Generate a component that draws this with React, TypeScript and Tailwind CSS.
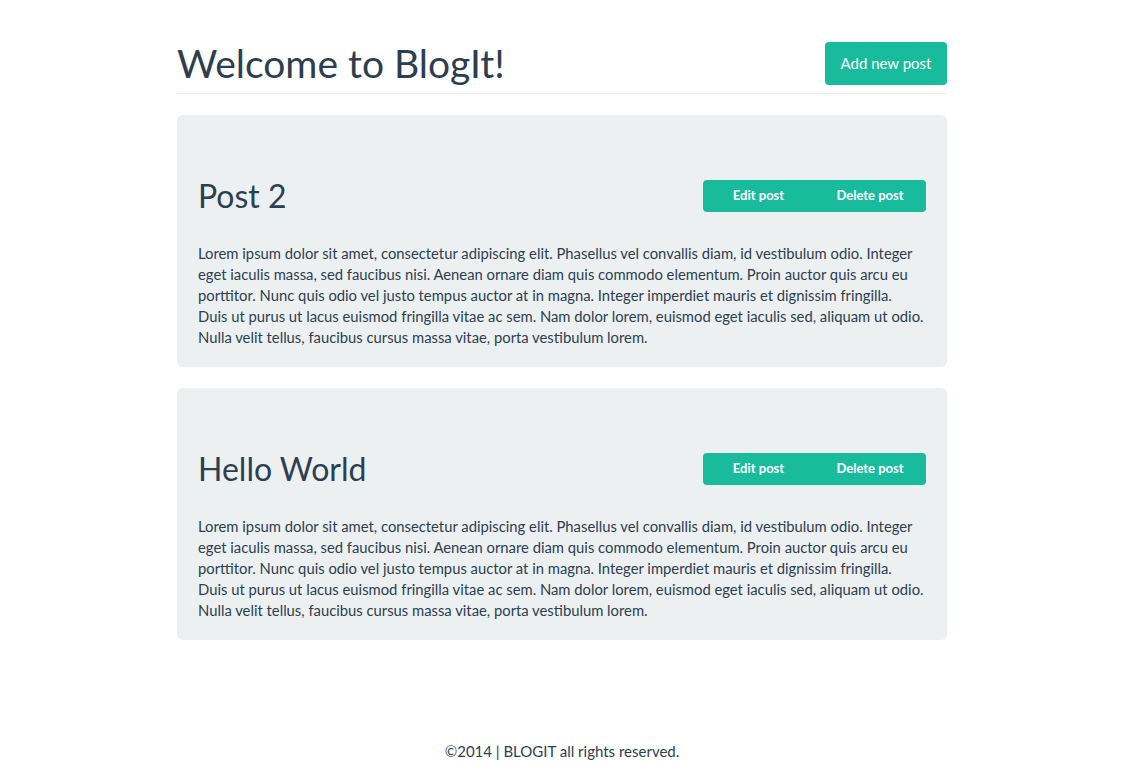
const lines = [
  "Lorem ipsum dolor sit amet, consectetur adipiscing elit. Phasellus vel convallis diam, id vestibulum odio. Integer",
  "eget iaculis massa, sed faucibus nisi. Aenean ornare diam quis commodo elementum. Proin auctor quis arcu eu",
  "porttitor. Nunc quis odio vel justo tempus auctor at in magna. Integer imperdiet mauris et dignissim fringilla.",
  "Duis ut purus ut lacus euismod fringilla vitae ac sem. Nam dolor lorem, euismod eget iaculis sed, aliquam ut odio.",
  "Nulla velit tellus, faucibus cursus massa vitae, porta vestibulum lorem.",
];

type Post = { title: string; body: string[] };

const posts: Post[] = [
  { title: "Post 2", body: lines },
  { title: "Hello World", body: lines },
];

function PostCard({ post }: { post: Post }) {
  return (
    <div className="rounded-md bg-[#ecf0f1] px-[21px] pt-[60px] pb-[19px]">
      <div className="flex h-[42px] items-center justify-between">
        <h2 className="text-[32px] leading-[1.1]">{post.title}</h2>
        <div className="flex overflow-hidden rounded-[4px] bg-[#18bc9c] text-[13px] font-bold text-white">
          <button className="h-[32px] w-[111px]">Edit post</button>
          <button className="h-[32px] w-[112px]">Delete post</button>
        </div>
      </div>
      <p className="mt-[26px] text-[14.8px] leading-[21px]">
        {post.body.map((l, i) => (
          <span key={i} className="block whitespace-nowrap">
            {l}
          </span>
        ))}
      </p>
    </div>
  );
}

export default function App() {
  return (
    <div
      className="min-h-[762px] bg-white text-[#2c3e50]"
      style={{ fontFamily: "Lato, 'Open Sans', sans-serif" }}
    >
      <div className="ml-[177px] w-[770px] pt-[42px]">
        <header className="flex items-end justify-between border-b border-[#ecf0f1] pb-[8px]">
          <h1 className="text-[39px] leading-[1.1]">Welcome to BlogIt!</h1>
          <button className="h-[43px] w-[122px] rounded-[4px] bg-[#18bc9c] text-[15px] text-white">
            Add new post
          </button>
        </header>
        <main className="mt-[21px] flex flex-col gap-[21px]">
          {posts.map((p) => (
            <PostCard key={p.title} post={p} />
          ))}
        </main>
        <footer className="mt-[101px] text-center text-[15px] leading-[21px]">
          ©2014 | BLOGIT all rights reserved.
        </footer>
      </div>
    </div>
  );
}
